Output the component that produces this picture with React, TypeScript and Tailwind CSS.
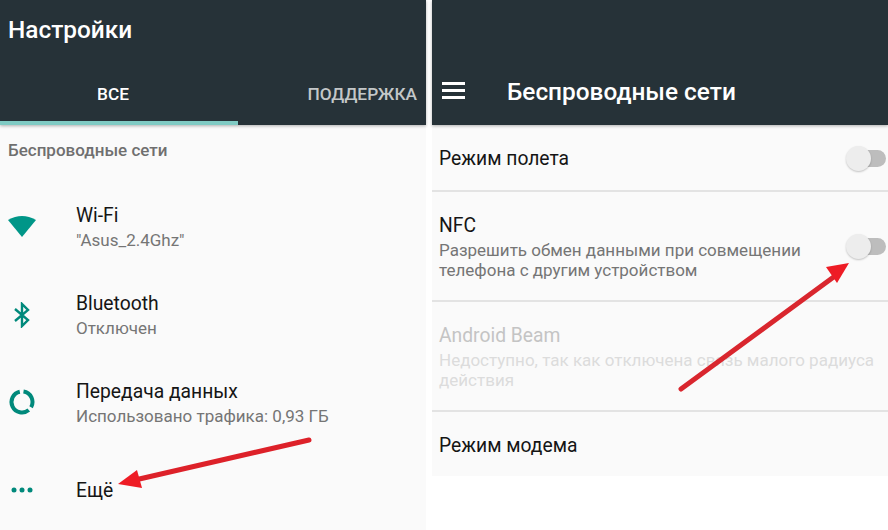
const font = { fontFamily: "Roboto, sans-serif" };

function Row({ icon, title, sub, className }: { icon: React.ReactNode; title: string; sub?: string; className: string }) {
  return (
    <div className={`flex items-center ${className}`}>
      <div className="w-[76px] pl-[7px] shrink-0">{icon}</div>
      <div>
        <div className="text-[19.3px] leading-[25px] text-[#151515]">{title}</div>
        {sub && <div className="text-[17px] leading-[24px] text-[#757575]">{sub}</div>}
      </div>
    </div>
  );
}

function Toggle() {
  return (
    <div className="relative w-[40px] h-[24px] shrink-0">
      <div className="absolute right-0 top-[4px] w-[30px] h-[17px] rounded-full bg-[#bdbdbd]" />
      <div className="absolute left-0 top-0 w-[25px] h-[25px] rounded-full bg-[#ededed] shadow-[0_1px_2px_rgba(0,0,0,0.22)]" />
    </div>
  );
}

export default function App() {
  return (
    <div className="relative w-[888px] h-[530px] bg-white flex gap-[6px] overflow-hidden" style={font}>
      <div className="w-[426px] h-[530px] flex flex-col bg-[#fafafa]">
        <div className="h-[125px] shrink-0 bg-[#263238] flex flex-col shadow-[0_1px_3px_rgba(0,0,0,0.3)]">
          <div className="h-[60px] pl-[8px] flex items-center text-[24.4px] font-medium text-white">Настройки</div>
          <div className="h-[65px] flex text-[17.3px] font-medium">
            <div className="w-[238px] flex items-center justify-center text-white border-b-[4px] border-[#80cbc4] pr-[12px] pt-[9px]">ВСЕ</div>
            <div className="flex-1 flex items-center justify-end pr-[9px] text-[#c3c7c8] pt-[9px] border-b-[4px] border-transparent">ПОДДЕРЖКА</div>
          </div>
        </div>
        <div className="pl-[8px] pt-[15px] text-[17px] leading-[20px] font-medium text-[#6f6f6f] h-[58px] shrink-0">Беспроводные сети</div>
        <Row
          className="h-[88px] shrink-0"
          title="Wi-Fi"
          sub={'"Asus_2.4Ghz"'}
          icon={<svg width="30" height="24" viewBox="0 0 30 24" className="-translate-y-[1px]"><path d="M1 6 Q15 -2 29 6 L15 23 Z" fill="#009688" /></svg>}
        />
        <Row
          className="h-[88px] shrink-0"
          title="Bluetooth"
          sub="Отключен"
          icon={<svg width="30" height="26" viewBox="0 0 30 26" fill="none" stroke="#00897b" strokeWidth="2.4"><path d="M8 7 L21 18 L15 24 V2 L21 8 L8 19" /></svg>}
        />
        <Row
          className="h-[88px] shrink-0"
          title="Передача данных"
          sub="Использовано трафика: 0,93 ГБ"
          icon={<svg width="30" height="28" viewBox="0 0 30 28" fill="none" stroke="#00897b" strokeWidth="4" className="-translate-y-[1px]"><path d="M16.5 3.6 A10.5 10.5 0 0 1 24.1 19.25" /><path d="M21.75 22.04 A10.5 10.5 0 1 1 12.8 3.73" /></svg>}
        />
        <Row
          className="h-[83px] shrink-0 pt-[3px]"
          title="Ещё"
          icon={<svg width="30" height="8" viewBox="0 0 30 8" fill="#00897b"><circle cx="7" cy="4" r="2.5" /><circle cx="15" cy="4" r="2.5" /><circle cx="23" cy="4" r="2.5" /></svg>}
        />
      </div>
      <div className="w-[456px] h-[476px] bg-[#fafafa] flex flex-col">
        <div className="h-[125px] shrink-0 bg-[#263238] flex items-end shadow-[0_1px_3px_rgba(0,0,0,0.3)]">
          <div className="h-[65px] flex items-center">
            <div className="w-[75px] pl-[10px]">
              <div className="w-[23px] flex flex-col gap-[4px] -translate-y-[2px]">
                <div className="h-[3px] bg-white" />
                <div className="h-[3px] bg-white" />
                <div className="h-[3px] bg-white" />
              </div>
            </div>
            <div className="text-[24.4px] font-medium text-white">Беспроводные сети</div>
          </div>
        </div>
        <div className="h-[67px] shrink-0 pl-[7px] pr-[2px] flex items-center justify-between border-b-2 border-[#e3e3e3]">
          <div className="text-[19.3px] text-[#151515] mt-[3px]">Режим полета</div>
          <Toggle />
        </div>
        <div className="h-[110px] shrink-0 pl-[7px] pr-[2px] flex items-center justify-between border-b-2 border-[#e3e3e3]">
          <div className="mt-[2px]">
            <div className="text-[19.3px] leading-[24px] mb-[2px] text-[#151515]">NFC</div>
            <div className="text-[17px] leading-[20px] text-[#757575]">Разрешить обмен данными при совмещении<br />телефона с другим устройством</div>
          </div>
          <Toggle />
        </div>
        <div className="h-[110px] shrink-0 pl-[7px] flex items-center border-b-2 border-[#e3e3e3]">
          <div className="mt-[1px]">
            <div className="text-[19.3px] leading-[24px] mb-[2px] text-[#c4c4c4]">Android Beam</div>
            <div className="text-[17px] leading-[20px] text-[#dcdcdc]">Недоступно, так как отключена связь малого радиуса<br />действия</div>
          </div>
        </div>
        <div className="flex-1 pl-[7px] flex items-center text-[19.3px] text-[#151515] pt-[4px]">Режим модема</div>
      </div>
      <svg className="absolute inset-0 pointer-events-none" width="888" height="530" viewBox="0 0 888 530">
        <path d="M309 440 L135 480" stroke="#dd2129" strokeWidth="5" strokeLinecap="round" />
        <path d="M118 484 L137 470 L142 488 Z" fill="#ee1c25" />
        <path d="M681 389 L835 276" stroke="#d9262e" strokeWidth="5" strokeLinecap="round" />
        <path d="M849 263 L826 267 L837 283 Z" fill="#ee1c25" />
      </svg>
    </div>
  );
}
